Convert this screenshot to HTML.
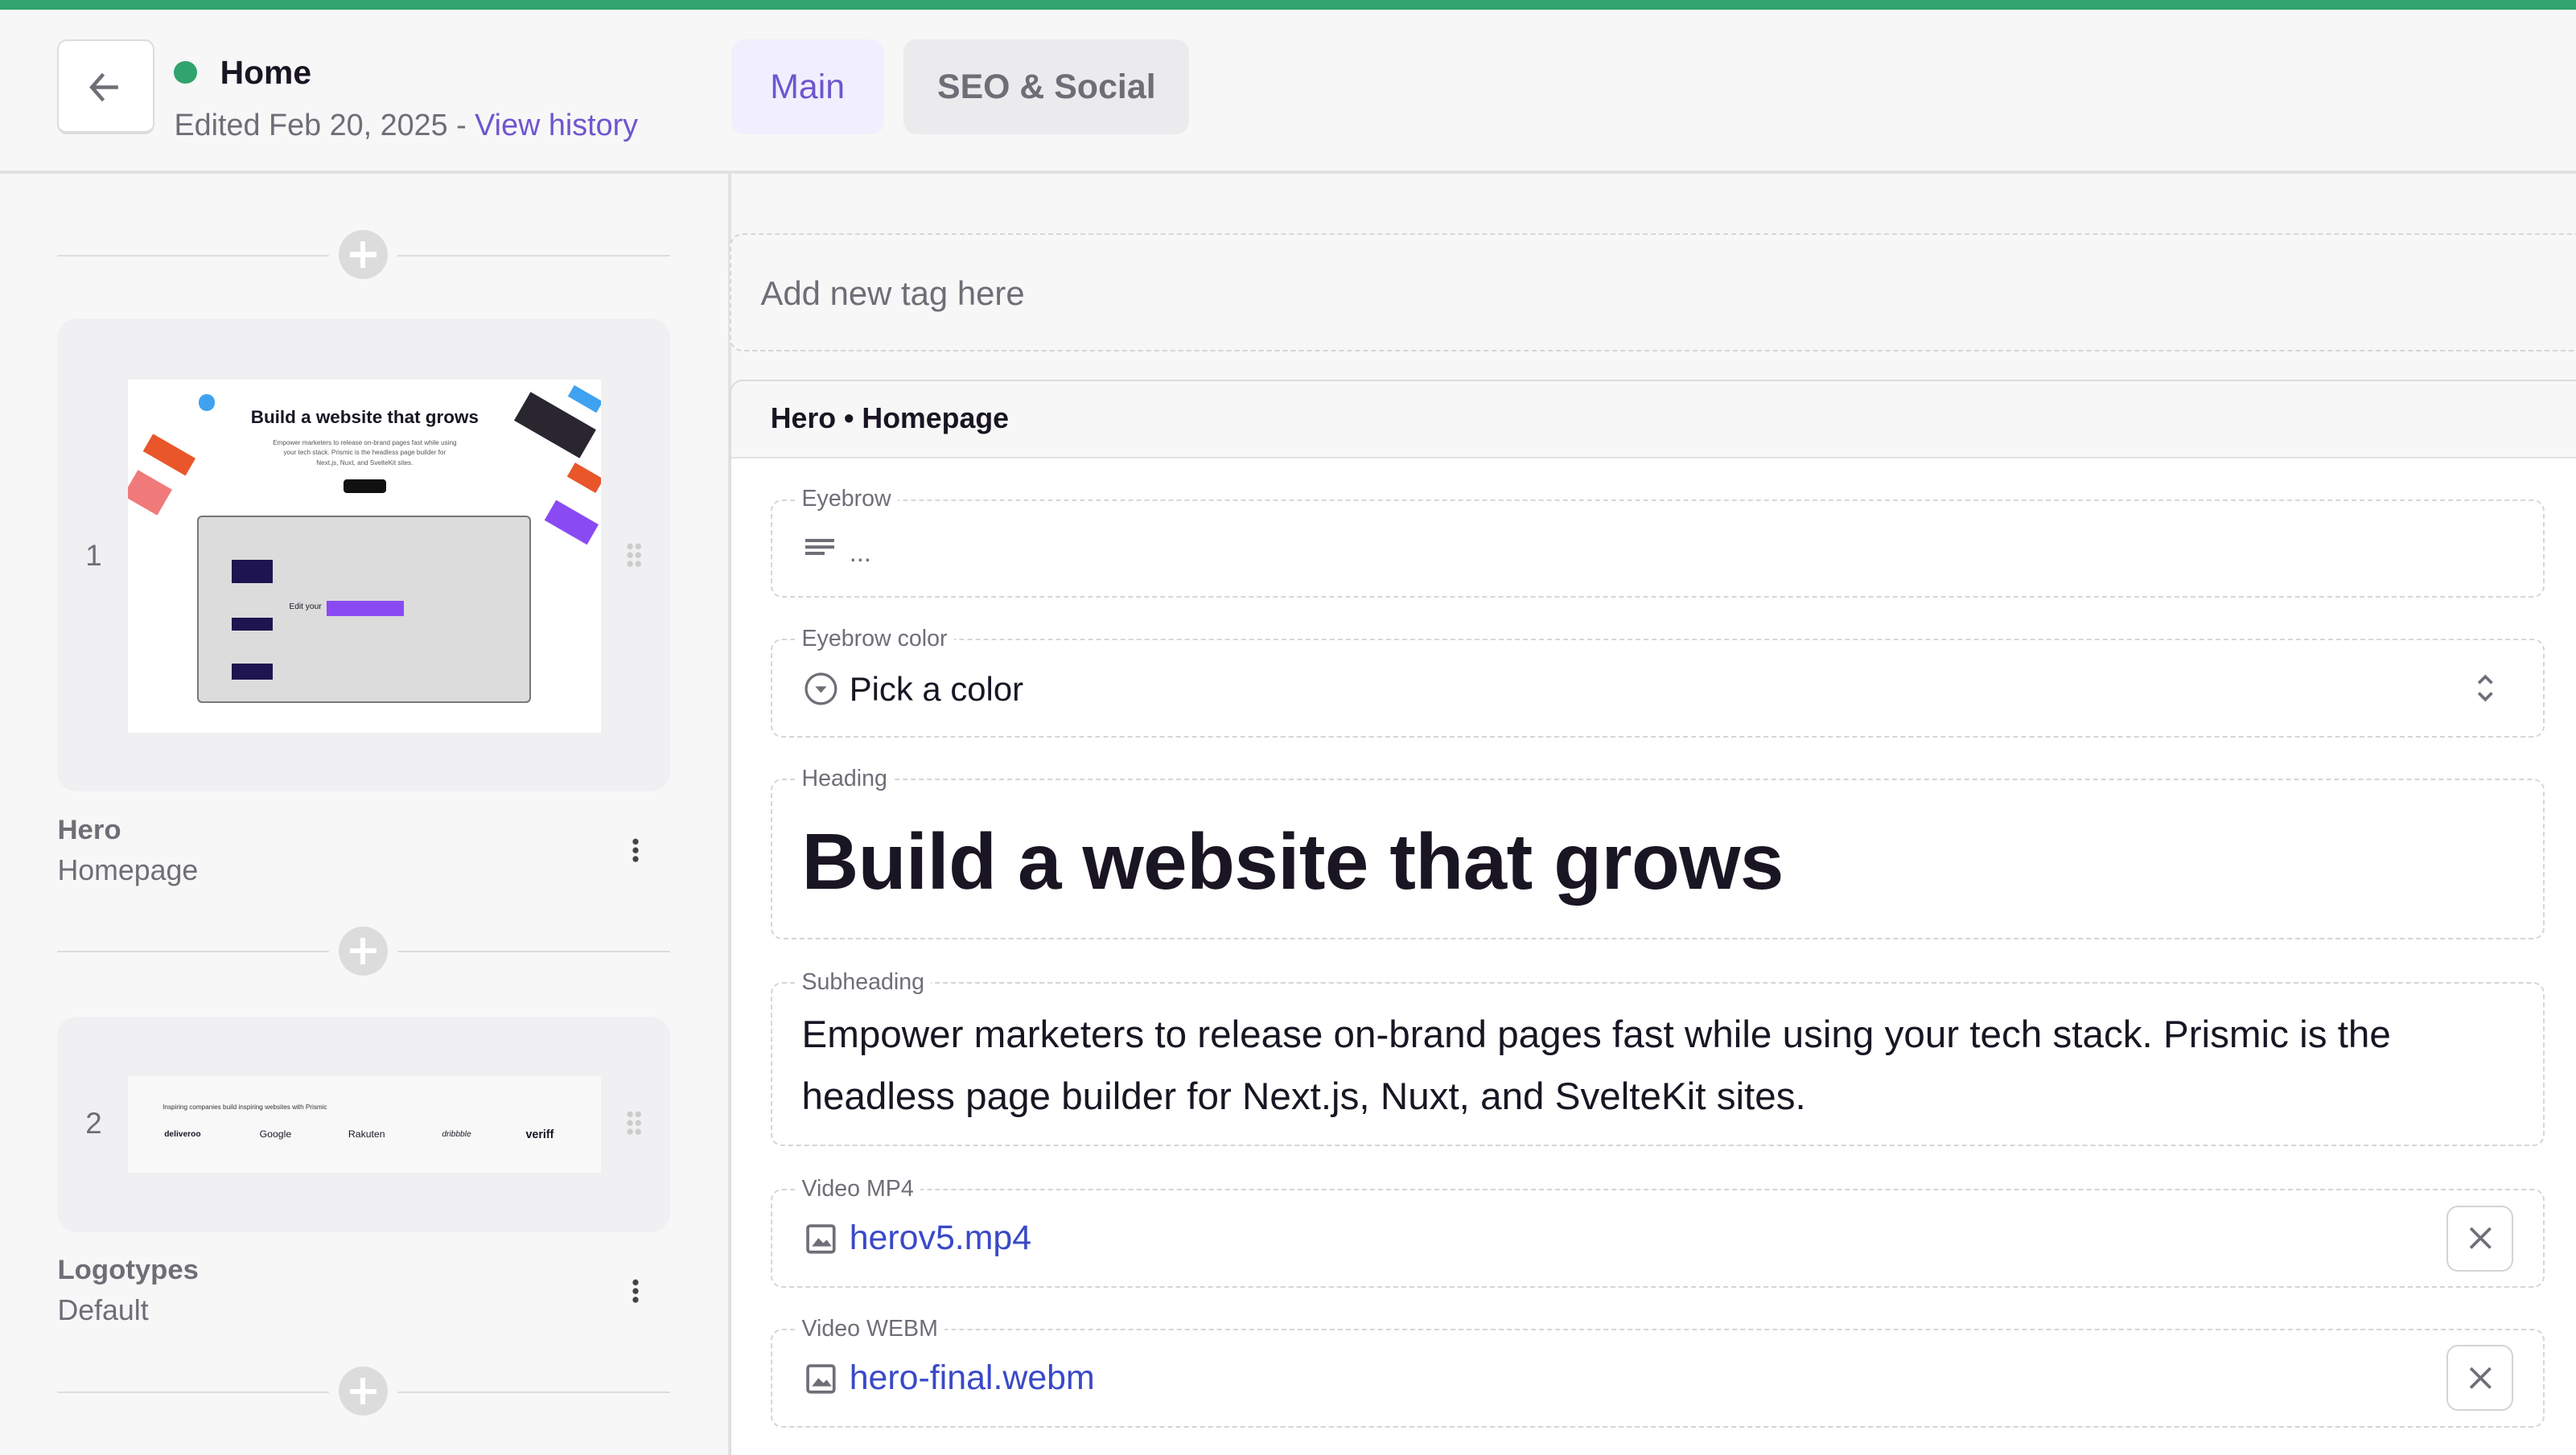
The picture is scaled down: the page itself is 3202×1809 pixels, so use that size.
<!DOCTYPE html>
<html><head><meta charset="utf-8"><style>
*{box-sizing:border-box;margin:0;padding:0}
html,body{width:3202px;height:1809px;overflow:hidden;background:#f7f7f7}
#r{zoom:2.04209;width:1568px;height:886px;position:relative;font-family:"Liberation Sans",sans-serif;color:#1a1523;overflow:hidden}
.a{position:absolute}
.g{color:#6f6e77}
.fld{position:absolute;left:469px;width:1080px;border:1px dashed #d6d6d6;border-radius:7px;background:#fff}
.lbl{position:absolute;left:14px;top:-9px;background:#fff;padding:0 4px;font-size:14px;color:#6f6e77;line-height:16px}
.sep{position:absolute;left:35px;width:373px;height:2px}
.sep:before{content:"";position:absolute;left:0;right:0;top:0;height:1px;background:#ddd}
.plus{position:absolute;left:171px;top:-15px;width:30px;height:30px;border-radius:50%;background:#dcdcdc;box-shadow:0 0 0 6px #f7f7f7}
.plus:before,.plus:after{content:"";position:absolute;background:#fff;left:7px;top:13.5px;width:16px;height:3px}
.plus:after{left:13.5px;top:7px;width:3px;height:16px}
.xb{position:absolute;right:18px;top:9px;width:41px;height:40px;border:1px solid #d4d4d4;border-radius:7px;background:#fff}
</style></head><body><div id="r">
<div class="a" style="left:0;top:0;width:1568px;height:6px;background:#30a46c"></div>
<div class="a" style="left:0;top:104px;width:1568px;height:2px;background:#e2e2e2"></div>
<div class="a" style="left:35px;top:24px;width:59px;height:58px;background:#fff;border:1px solid #dcdcdc;border-bottom-width:2px;border-radius:6px"></div>
<svg class="a" style="left:52px;top:41px" width="24" height="24" viewBox="0 0 24 24"><path d="M20 12H4M11 4l-7 8 7 8" fill="none" stroke="#6f6e77" stroke-width="2.2"/></svg>
<div class="a" style="left:106px;top:37px;width:14px;height:14px;border-radius:50%;background:#30a46c"></div>
<div class="a" style="left:134px;top:33px;font-size:20px;font-weight:bold">Home</div>
<div class="a g" style="left:106px;top:66px;font-size:18.5px">Edited Feb 20, 2025 - <span style="color:#6e56cf">View history</span></div>
<div class="a" style="left:445px;top:24px;width:93px;height:58px;background:#f1effe;border-radius:8px;color:#6e56cf;font-size:21px;text-align:center;line-height:58px">Main</div>
<div class="a" style="left:550px;top:24px;width:174px;height:58px;background:#ebebed;border-radius:8px;color:#6f6e77;font-size:21px;font-weight:bold;text-align:center;line-height:58px">SEO &amp; Social</div>
<div class="a" style="left:443px;top:106px;width:2px;height:780px;background:#e2e2e2"></div>

<!-- left -->
<div class="sep" style="top:155px"><div class="plus"></div></div>
<div class="a" style="left:35px;top:194px;width:373px;height:288px;background:#f0f0f2;border-radius:12px"></div>
<div class="a g" style="left:52px;top:328px;font-size:18px">1</div>
<div class="a" style="left:78px;top:231px;width:288px;height:215px;background:#fff;overflow:hidden">
 <div class="a" style="left:0;width:288px;top:17px;text-align:center;font-size:11px;font-weight:bold">Build a website that grows</div>
 <div class="a" style="left:88px;width:112px;top:36px;text-align:center;font-size:4px;line-height:6px;color:#555">Empower marketers to release on-brand pages fast while using your tech stack. Prismic is the headless page builder for Next.js, Nuxt, and SvelteKit sites.</div>
 <div class="a" style="left:131px;top:61px;width:26px;height:8px;background:#111;border-radius:2px"></div>
 <div class="a" style="left:10px;top:40px;width:30px;height:12px;background:#e8562a;transform:rotate(30deg)"></div>
 <div class="a" style="left:0;top:60px;width:24px;height:18px;background:#f07a7a;transform:rotate(30deg)"></div>
 <div class="a" style="left:43px;top:9px;width:10px;height:10px;border-radius:50%;background:#3fa2f0"></div>
 <div class="a" style="left:237px;top:18px;width:46px;height:20px;background:#2a2630;transform:rotate(30deg)"></div>
 <div class="a" style="left:268px;top:8px;width:20px;height:8px;background:#3fa2f0;transform:rotate(30deg)"></div>
 <div class="a" style="left:268px;top:55px;width:20px;height:10px;background:#e8562a;transform:rotate(30deg)"></div>
 <div class="a" style="left:255px;top:80px;width:30px;height:14px;background:#8a4af3;transform:rotate(30deg)"></div>
 <div class="a" style="left:42px;top:83px;width:203px;height:114px;background:#dcdcdc;border:1px solid #777;border-radius:3px"></div>
 <div class="a" style="left:63px;top:110px;width:25px;height:14px;background:#1e1450"></div>
 <div class="a" style="left:63px;top:145px;width:25px;height:8px;background:#1e1450"></div>
 <div class="a" style="left:63px;top:173px;width:25px;height:10px;background:#1e1450"></div>
 <div class="a" style="left:121px;top:135px;width:47px;height:9px;background:#8a4af3"></div>
 <div class="a" style="left:98px;top:136px;font-size:5px">Edit your</div>
</div>
<div class="a" style="left:381px;top:330px;width:10px;height:16px;background:radial-gradient(circle,#ccc 1.6px,transparent 2px) 0 0/5px 5.3px"></div>
<div class="a" style="left:35px;top:496px;font-size:17px;font-weight:bold;color:#6f6e77">Hero</div>
<div class="a g" style="left:35px;top:520px;font-size:17.5px">Homepage</div>
<div class="a" style="left:385px;top:510px;width:4px;height:16px;background:radial-gradient(circle,#444 1.6px,transparent 2px) 0 0/4px 5.3px"></div>
<div class="sep" style="top:579px"><div class="plus"></div></div>
<div class="a" style="left:35px;top:619px;width:373px;height:131px;background:#f0f0f2;border-radius:12px"></div>
<div class="a g" style="left:52px;top:674px;font-size:18px">2</div>
<div class="a" style="left:78px;top:655px;width:288px;height:59px;background:#f8f8f8">
 <div class="a" style="left:21px;top:17px;font-size:4px;color:#333">Inspiring companies build inspiring websites with Prismic</div>
 <div class="a" style="left:22px;top:33px;font-size:5px;font-weight:bold">deliveroo</div>
 <div class="a" style="left:80px;top:32px;font-size:6px">Google</div>
 <div class="a" style="left:134px;top:32px;font-size:6px">Rakuten</div>
 <div class="a" style="left:191px;top:33px;font-size:5px;font-style:italic">dribbble</div>
 <div class="a" style="left:242px;top:32px;font-size:7px;font-weight:bold">veriff</div>
</div>
<div class="a" style="left:381px;top:676px;width:10px;height:16px;background:radial-gradient(circle,#ccc 1.6px,transparent 2px) 0 0/5px 5.3px"></div>
<div class="a" style="left:35px;top:764px;font-size:17px;font-weight:bold;color:#6f6e77">Logotypes</div>
<div class="a g" style="left:35px;top:788px;font-size:17.5px">Default</div>
<div class="a" style="left:385px;top:778px;width:4px;height:16px;background:radial-gradient(circle,#444 1.6px,transparent 2px) 0 0/4px 5.3px"></div>
<div class="sep" style="top:847px"><div class="plus"></div></div>

<!-- right -->
<div class="a" style="left:444px;top:142px;width:1140px;height:72px;border:1px dashed #d6d6d6;border-radius:8px;background:#f7f7f7"></div>
<div class="a g" style="left:463px;top:167px;font-size:20.5px">Add new tag here</div>
<div class="a" style="left:444px;top:231px;width:1140px;height:680px;border:1px solid #dcdcdc;border-radius:8px;background:#fff;overflow:hidden">
 <div style="height:47px;background:#f7f7f7;border-bottom:1px solid #e2e2e2;padding:13px 0 0 24px;font-size:17.5px;font-weight:bold">Hero • Homepage</div>
</div>
<div class="fld" style="top:304px;height:60px"><div class="lbl">Eyebrow</div>
 <div class="a" style="left:20px;top:23px;width:18px;height:2px;background:#6f6e77;box-shadow:0 4px 0 #6f6e77"></div>
 <div class="a" style="left:20px;top:31px;width:12px;height:2px;background:#6f6e77"></div>
 <div class="a g" style="left:47px;top:22px;font-size:16px">...</div></div>
<div class="fld" style="top:389px;height:60px"><div class="lbl">Eyebrow color</div>
 <svg class="a" style="left:19px;top:19px" width="21" height="21" viewBox="0 0 21 21"><circle cx="10.5" cy="10.5" r="9" fill="none" stroke="#6f6e77" stroke-width="1.6"/><path d="M7 9h7l-3.5 4z" fill="#6f6e77"/></svg>
 <div class="a" style="left:47px;top:18px;font-size:20.5px">Pick a color</div>
 <svg class="a" style="left:1036px;top:18px" width="14" height="22" viewBox="0 0 14 22"><path d="M3 8l4-4 4 4M3 14l4 4 4-4" fill="none" stroke="#6f6e77" stroke-width="1.8"/></svg></div>
<div class="fld" style="top:474px;height:98px"><div class="lbl">Heading</div>
 <div class="a" style="left:18px;top:22px;font-size:48px;font-weight:bold;letter-spacing:-0.3px">Build a website that grows</div></div>
<div class="fld" style="top:598px;height:100px"><div class="lbl">Subheading</div>
 <div class="a" style="left:18px;top:12px;width:1025px;font-size:23.3px;line-height:38px">Empower marketers to release on-brand pages fast while using your tech stack. Prismic is the headless page builder for Next.js, Nuxt, and SvelteKit sites.</div></div>
<div class="fld" style="top:724px;height:60px"><div class="lbl">Video MP4</div>
 <svg class="a" style="left:20px;top:20px" width="19" height="19" viewBox="0 0 19 19"><rect x="1.5" y="1.5" width="16" height="16" rx="1.5" fill="none" stroke="#6f6e77" stroke-width="1.8"/><path d="M4 14l4-5 3 3 2-2 3 4z" fill="#6f6e77"/></svg>
 <div class="a" style="left:47px;top:17px;font-size:21px;color:#3a49c8">herov5.mp4</div>
 <div class="xb"><svg class="a" style="left:12px;top:11px" width="16" height="16" viewBox="0 0 16 16"><path d="M2 2l12 12M14 2L2 14" stroke="#6f6e77" stroke-width="1.8"/></svg></div></div>
<div class="fld" style="top:809px;height:60px"><div class="lbl">Video WEBM</div>
 <svg class="a" style="left:20px;top:20px" width="19" height="19" viewBox="0 0 19 19"><rect x="1.5" y="1.5" width="16" height="16" rx="1.5" fill="none" stroke="#6f6e77" stroke-width="1.8"/><path d="M4 14l4-5 3 3 2-2 3 4z" fill="#6f6e77"/></svg>
 <div class="a" style="left:47px;top:17px;font-size:21px;color:#3a49c8">hero-final.webm</div>
 <div class="xb"><svg class="a" style="left:12px;top:11px" width="16" height="16" viewBox="0 0 16 16"><path d="M2 2l12 12M14 2L2 14" stroke="#6f6e77" stroke-width="1.8"/></svg></div></div>
</div></body></html>
